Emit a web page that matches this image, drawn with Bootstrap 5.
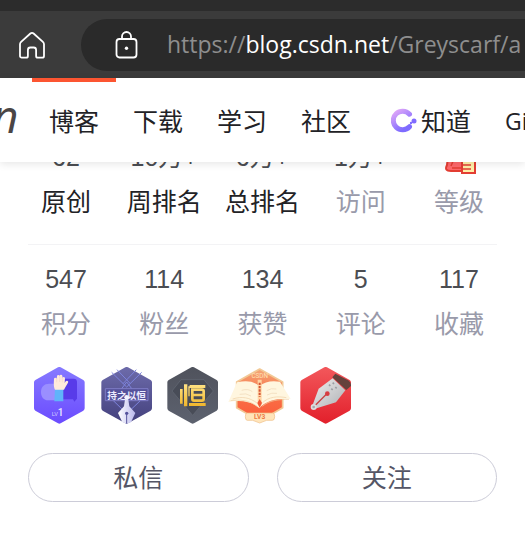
<!DOCTYPE html>
<html lang="zh-CN">
<head>
<meta charset="utf-8">
<meta name="viewport" content="width=device-width, initial-scale=1">
<title>CSDN 博客</title>
<link href="https://cdn.jsdelivr.net/npm/bootstrap@5.3.0/dist/css/bootstrap.min.css" rel="stylesheet">
<style>
body{font-family:"Liberation Sans","Noto Sans CJK SC",sans-serif;font-size:25px;color:#222226}
.tabstrip{height:11px;background:#2c2c2c}
.toolbar{height:67px;background:#3b3b3b;padding-left:18px}
.home-btn{width:28px;height:28px}
.address{height:52px;margin-left:35px;padding-left:32px;background:#2a2a2a;border-radius:26px 0 0 26px;font-family:"Open Sans",sans-serif;font-size:23px;color:#8e8e8e}
.address a{margin-left:27px;color:inherit}
.address b{font-weight:400;color:#fff}
.site-nav{height:84px;background:#fff;box-shadow:0 2px 8px rgba(0,0,0,.1);z-index:2;font-family:"Open Sans","Noto Sans CJK SC",sans-serif}
.brand{width:32px;color:#4a4545;font-size:46px;font-style:italic;line-height:74px}
.brand span{margin-left:-8px}
.site-nav .nav-item-link{padding:0 17px;line-height:78px;color:#222226;border-top:4px solid transparent}
.site-nav .nav-item-link.current{border-color:#fc5531}
.site-nav .wide{padding-left:23px;padding-right:17px}
.site-nav .last{padding-right:0;font-size:23px}
.profile{margin-top:-27px;padding:0 28px}
.stat{width:76px;line-height:44px}
.stat dt{line-height:46px;color:#999aaa;font-weight:400}
.stat dd{color:#4b4d52}
.stat.rank dt{color:#222226}
.stats-top{padding-bottom:19px;border-bottom:1px solid #f3f3f5}
.stats-more{padding-top:12px}
.badges{margin:20px -1px 0}
.actions{margin-top:29px;gap:28px}
.pill-btn{height:49px;padding:0;border:1px solid #ccccd8;font-size:25px;line-height:46px;color:#555666}
</style>
<script src="https://cdn.jsdelivr.net/npm/bootstrap@5.3.0/dist/js/bootstrap.bundle.min.js"></script>
</head>
<body>
<div class="tabstrip"></div>
<div class="toolbar d-flex align-items-center">
  <button class="btn p-0 border-0 d-flex home-btn flex-shrink-0" aria-label="主页"><svg width="28" height="28" viewBox="0 0 28 28" fill="none" stroke="#fff" stroke-width="1.8" stroke-linejoin="round"><path d="M2 13.2c0-1 .4-1.7 1.1-2.4l9.3-8.3c1-.8 2.2-.8 3.2 0l9.3 8.3c.7.7 1.1 1.4 1.1 2.4V25c0 1-.7 1.7-1.7 1.7h-4.6c-1 0-1.6-.7-1.6-1.7v-6c0-1.6-.9-2.5-2.4-2.5h-3.4c-1.5 0-2.4.9-2.4 2.5v6c0 1-.6 1.7-1.6 1.7H3.7C2.7 26.7 2 26 2 25z"/></svg></button>
  <div class="address d-flex align-items-center flex-fill overflow-hidden text-nowrap">
    <svg class="flex-shrink-0" width="27" height="28" viewBox="0 0 27 28" fill="none" stroke="#fff" stroke-width="1.8"><rect x="3.5" y="8" width="20" height="18.5" rx="3"/><path d="M9 8V5.500a4.500 4.500 0 0 1 9 0V8"/><circle cx="13.500" cy="17.300" r="1.700" fill="#fff" stroke="none"/></svg>
    <a class="text-decoration-none" href="#">https://<b>blog.csdn.net</b>/Greyscarf/a</a>
  </div>
</div>
<nav class="site-nav position-relative">
  <div class="d-flex overflow-hidden text-nowrap">
    <div class="brand flex-shrink-0"><span>n</span></div>
    <a class="nav-item-link current text-decoration-none" href="#">博客</a>
    <a class="nav-item-link text-decoration-none" href="#">下载</a>
    <a class="nav-item-link text-decoration-none" href="#">学习</a>
    <a class="nav-item-link text-decoration-none" href="#">社区</a>
    <a class="nav-item-link wide text-decoration-none d-flex align-items-center" href="#"><svg class="me-1" width="26" height="26" viewBox="0 0 26 26"><defs><linearGradient id="cg" x1="0" y1="0" x2=".6" y2="1"><stop stop-color="#e2a8f8"/><stop offset="1" stop-color="#7e6bff"/></linearGradient></defs><path d="M18.500 6.200A9.300 9.300 0 1 0 18.500 18.700" fill="none" stroke="url(#cg)" stroke-width="5" stroke-linecap="round"/><circle cx="23" cy="13" r="2.500" fill="#806bff"/><circle cx="20" cy="15" r="1.200" fill="#806bff"/></svg>知道</a>
    <a class="nav-item-link last text-decoration-none" href="#">Gi</a>
  </div>
</nav>
<main class="profile">
  <dl class="stats-top d-flex justify-content-between text-center text-nowrap mb-0">
    <div class="stat rank d-flex flex-column-reverse"><dt>原创</dt><dd class="mb-0">62</dd></div>
    <div class="stat rank d-flex flex-column-reverse"><dt>周排名</dt><dd class="mb-0">10万+</dd></div>
    <div class="stat rank d-flex flex-column-reverse"><dt>总排名</dt><dd class="mb-0">6万+</dd></div>
    <div class="stat d-flex flex-column-reverse"><dt>访问</dt><dd class="mb-0">1万+</dd></div>
    <div class="stat d-flex flex-column-reverse"><dt>等级</dt><dd class="mb-0 d-flex justify-content-center"><svg width="34" height="44" viewBox="0 0 34 44"><path d="M8 8h16v28H9c-5 0-6-2-4-6z" fill="#ff686c" stroke="#e33e33" stroke-width="2"/><path d="M9 31l3-7M10 33h10" stroke="#e33e33" stroke-width="1.500"/><path d="M20 18h13v20H20z" fill="#fff0a8" stroke="#e33e33" stroke-width="2"/><path d="M21 30h8M21 34h8" stroke="#e33e33" stroke-width="1.500"/></svg></dd></div>
  </dl>
  <dl class="stats-more d-flex justify-content-between text-center text-nowrap mb-0">
    <div class="stat d-flex flex-column-reverse"><dt>积分</dt><dd class="mb-0">547</dd></div>
    <div class="stat d-flex flex-column-reverse"><dt>粉丝</dt><dd class="mb-0">114</dd></div>
    <div class="stat d-flex flex-column-reverse"><dt>获赞</dt><dd class="mb-0">134</dd></div>
    <div class="stat d-flex flex-column-reverse"><dt>评论</dt><dd class="mb-0">5</dd></div>
    <div class="stat d-flex flex-column-reverse"><dt>收藏</dt><dd class="mb-0">117</dd></div>
  </dl>
  <div class="badges d-flex">
    <svg width="66" height="57" viewBox="0 0 198 171">
      <defs>
        <linearGradient id="b1" x1="0" y1="0" x2="0" y2="1"><stop stop-color="#8578ff"/><stop offset="1" stop-color="#6c4dff"/></linearGradient>
        <linearGradient id="b2" x1="0" y1="0" x2="0" y2="1"><stop stop-color="#6b69a8"/><stop offset="1" stop-color="#45427f"/></linearGradient>
        <linearGradient id="b3" x1="0" y1="0" x2="0" y2="1"><stop stop-color="#50535d"/><stop offset="1" stop-color="#5c616e"/></linearGradient>
        <linearGradient id="b4" x1="0" y1="0" x2="0" y2="1"><stop stop-color="#f4a878"/><stop offset=".5" stop-color="#f97047"/><stop offset="1" stop-color="#fb5a38"/></linearGradient>
        <linearGradient id="b5" x1="0" y1="0" x2="0" y2="1"><stop stop-color="#f25559"/><stop offset="1" stop-color="#e3222d"/></linearGradient>
        <linearGradient id="gold" gradientUnits="userSpaceOnUse" x1="0" y1="50" x2="0" y2="118"><stop stop-color="#ffe487"/><stop offset="1" stop-color="#efb52b"/></linearGradient>
        <linearGradient id="nib" x1="0" y1="0" x2="1" y2="0"><stop stop-color="#fff"/><stop offset="1" stop-color="#b9b8ec"/></linearGradient>
        <linearGradient id="metal" x1="0" y1="0" x2="1" y2="1"><stop stop-color="#efefef"/><stop offset="1" stop-color="#aeb0b4"/></linearGradient>
      </defs>
      <path d="M97 8l68 38v78l-68 38-68-38V46z" fill="url(#b1)" stroke="url(#b1)" stroke-width="16" stroke-linejoin="round"/>
      <path d="M66 50h27v50H63c-12 0-21-9-21-25s10-25 24-25z" fill="#9a8fff"/>
      <path d="M95 35h45q10 0 10 10v50l-8 9-4-7H95z" fill="#583be9"/>
      <path d="M84 66h25v37H82z" fill="#60b4fa"/>
      <path d="M84 68c-4-8-4-16-3-32q0-4 4-4t4 4l1-8q0-4 4-4t4 4v-1q0-4 4-4t4 4l1 6q1-4 4-3t3 4l-1 14 3-5q3-3 6-1t1 5l-8 14-4 7z" fill="#ffeadb"/>
      <path d="M89 34v12M98 27v18M106 31v15" stroke="#efd0c5" stroke-width="1.500"/>
      <text x="74" y="146" font-size="17" fill="#d3caff" font-family="Roboto,sans-serif">LV</text><text x="92" y="147" font-size="30" fill="#eee9ff" font-family="Roboto,sans-serif" font-weight="500">1</text>
    </svg>
    <svg width="66" height="57" viewBox="0 0 198 171">
      <path d="M101 8l68 38v78l-68 38-68-38V46z" fill="url(#b2)" stroke="url(#b2)" stroke-width="16" stroke-linejoin="round"/>
      <path d="M56 16l45 44 45-44M72 8l40 42M130 8L90 50M60 100l41-55 42 55-42 40z" fill="none" stroke="#7e84dd" stroke-width="3"/>
      <path d="M37 65h128v36H37z" fill="#55529b" stroke="#7e7cc5" stroke-width="3"/>
      <text x="101" y="95" text-anchor="middle" font-size="29" font-weight="700" fill="#ececff" font-family="Noto Sans CJK SC,sans-serif">持之以恒</text>
      <path d="M97 91h8l4 27 18 20-13 28-13 4-13-4-13-28 18-20z" fill="url(#nib)"/><path d="M101 142v28" stroke="#55529b" stroke-width="3"/><circle cx="101" cy="139" r="5" fill="#55529b"/><circle cx="101" cy="91" r="7" fill="#f4f3ff"/>
    </svg>
    <svg width="66" height="57" viewBox="0 0 198 171">
      <path d="M101 8l68 38v78l-68 38-68-38V46z" fill="url(#b3)" stroke="url(#b3)" stroke-width="16" stroke-linejoin="round"/>
      <path d="M66 38h69l28 34-62 73-62-73z" fill="#484c57" stroke="#646975" stroke-width="2"/>
      <path d="M75 52h10v66H75zM63 66h8v44h-8zM88 58h4v30h-4zM92 54h47v9H92zM90 108h50v9H90z" fill="url(#gold)"/>
      <path d="M100 68h29q5 0 5 5v23q0 5-5 5h-24q-5 0-5-5zM102 84h30" fill="none" stroke="url(#gold)" stroke-width="8"/>
    </svg>
    <svg width="66" height="57" viewBox="0 0 198 171">
      <path d="M104 6l69 39v77l-69 40-69-40V45z" fill="url(#b4)" stroke="#f2c996" stroke-width="5" stroke-linejoin="round"/>
      <text x="104" y="33" text-anchor="middle" font-size="19" fill="#ffe1b5" font-family="Roboto,sans-serif">CSDN</text>
      <path d="M103 124c-20-20-54-26-93-19l26-59c29-7 53-3 67 12 16-15 38-18 62-14l32 52c-40-3-76 6-94 28z" fill="#fff6df"/>
      <path d="M96 108C75 92 51 87 23 96M112 108c18-19 46-21 72-16M96 118C72 99 43 97 17 101M112 118c20-18 50-21 80-21" fill="none" stroke="#efcfa4" stroke-width="2"/>
      <path d="M50 70q20-6 32 4M44 82q20-5 34 5M125 71q14-9 29-5M126 84q14-8 30-5" fill="none" stroke="#efd6b5" stroke-width="2"/>
      <path d="M98 38h12v75l-6 9-6-9z" fill="#ffd5a5"/><path d="M104 47v42" stroke="#d55635" stroke-width="6" stroke-dasharray="7 3"/><path d="M104 96l7 12-7 14-7-14z" fill="#f15b38"/>
      <path d="M67 138h76q6 0 6 11t-7 11h-17l-21 8-21-8H67q-6 0-6-11t6-11z" fill="#ffe5bb" stroke="#efbd84" stroke-width="2"/>
      <text x="104" y="157" text-anchor="middle" font-size="20" font-weight="700" fill="#ec7b43" font-family="Roboto,sans-serif">LV3</text>
    </svg>
    <svg width="66" height="57" viewBox="0 0 198 171">
      <path d="M104 8l68 38v78l-68 38-68-38V46z" fill="url(#b5)" stroke="url(#b5)" stroke-width="16" stroke-linejoin="round"/>
      <path d="M133 20l38 20q9 5 9 13v4l-14 12-42-38z" fill="#65413c"/>
      <path d="M64 116l19-51 42-31 38 36-28 36-63 19z" fill="url(#metal)"/>
      <path d="M70 118l36-36" stroke="#c84343" stroke-width="4"/><circle cx="109" cy="80" r="7" fill="#d73c40"/><circle cx="68" cy="120" r="9" fill="#ddd"/><circle cx="68" cy="120" r="4" fill="#a8a8aa"/>
      <path d="M114 53l4 4m7-10l4 4m-8 14l4 4m8-9l4 4" stroke="#9b9da2" stroke-width="5"/>
    </svg>
  </div>
  <div class="actions d-flex">
    <button type="button" class="btn pill-btn rounded-pill flex-fill">私信</button>
    <button type="button" class="btn pill-btn rounded-pill flex-fill">关注</button>
  </div>
</main>
</body>
</html>
